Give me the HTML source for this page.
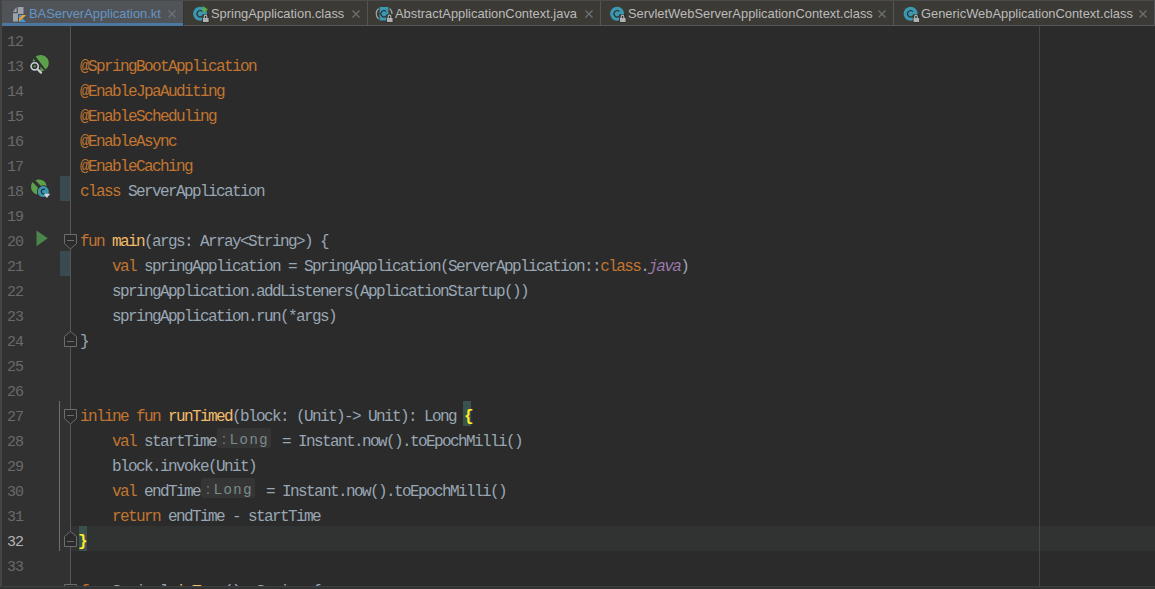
<!DOCTYPE html>
<html><head><meta charset="utf-8">
<style>
html,body{margin:0;padding:0;}
body{width:1155px;height:589px;overflow:hidden;background:#2b2b2b;position:relative;font-family:"Liberation Sans",sans-serif;}
.abs{position:absolute;}
/* tab bar */
#tabbar{position:absolute;left:0;top:0;width:1155px;height:26px;background:#3b3a35;}
#tabbar .topline{position:absolute;left:0;top:0;width:1155px;height:1px;background:#4b4b4b;}
#tabbar .botline{position:absolute;left:0;top:25px;width:1155px;height:1px;background:#555555;}
.tab{position:absolute;top:1px;height:24px;}
.tab .name{position:absolute;top:4px;font-size:12.9px;line-height:16px;color:#bbbbbb;white-space:nowrap;}
.tab .x{position:absolute;top:9px;width:8px;height:8px;}
.sep{position:absolute;top:1px;width:1px;height:24px;background:#555555;}
/* editor */
#gutter{position:absolute;left:2px;top:26px;width:68px;height:560px;background:#313131;}
#leftstrip{position:absolute;left:0;top:0;width:2px;height:589px;background:#444444;}
#gsep{position:absolute;left:70px;top:26px;width:1px;height:560px;background:#555555;}
#margin{position:absolute;left:1039px;top:26px;width:1px;height:560px;background:#474747;}
#bottom{position:absolute;z-index:10;left:0;top:586px;width:1155px;height:3px;background:#323434;border-top:1px solid #3d3f40;box-sizing:border-box;}
.ln{position:absolute;margin-top:4px;left:7px;width:20px;font-family:"Liberation Mono",monospace;font-size:15px;letter-spacing:-1px;line-height:25px;height:25px;color:#6a6a6a;white-space:pre;}
.code{position:absolute;margin-top:4px;left:80px;font-family:"Liberation Mono",monospace;font-size:16px;letter-spacing:-1.6px;line-height:25px;height:25px;color:#99a6b3;white-space:pre;}
.ln.cur{color:#b4b4b4;}
.k{color:#c27530;}
.f{color:#f2bc68;}
.p{color:#9876aa;font-style:italic;}
.hint{display:inline-block;position:relative;width:58px;height:25px;vertical-align:top;letter-spacing:0;}
.hint i{position:absolute;left:1px;top:-2px;width:54px;height:20px;background:#353535;border-radius:2px;font-style:normal;font-family:"Liberation Sans",sans-serif;font-size:14px;line-height:22px;color:#7c8c89;letter-spacing:2px;}
.brace{color:#ffef28;font-weight:bold;}
.hint b{position:absolute;left:5px;top:0;font-weight:normal;}
.hint s{position:absolute;left:13px;top:0;text-decoration:none;}
.vcs{position:absolute;left:60px;width:10px;height:25px;background:#394b50;}
</style></head><body>
<div id="tabbar">
  <div class="topline"></div>
  <div class="botline"></div>
  <!-- tab1 selected -->
  <div class="tab" style="left:2px;width:181px;background:#505459;height:25px;"></div>
  <div class="abs" style="left:2px;top:23px;width:181px;height:3px;background:#4a78a2;"></div>
  <div class="sep" style="left:183px;background:#353535;height:25px;"></div>
  <div class="sep" style="left:367px;"></div>
  <div class="sep" style="left:600px;"></div>
  <div class="sep" style="left:893px;"></div>
  <div class="sep" style="left:1154px;"></div>
  <div class="tab" style="left:0;width:0"></div>
  <span class="abs" style="left:29px;top:6px;font-size:12.9px;line-height:16px;color:#6694c2;white-space:nowrap;">BAServerApplication.kt</span>
  <span class="abs" style="left:211px;top:6px;font-size:12.9px;line-height:16px;color:#bbbbbb;white-space:nowrap;">SpringApplication.class</span>
  <span class="abs" style="left:395px;top:6px;font-size:12.9px;line-height:16px;color:#bbbbbb;white-space:nowrap;">AbstractApplicationContext.java</span>
  <span class="abs" style="left:628px;top:6px;font-size:12.9px;line-height:16px;color:#bbbbbb;white-space:nowrap;">ServletWebServerApplicationContext.class</span>
  <span class="abs" style="left:921px;top:6px;font-size:12.9px;line-height:16px;color:#bbbbbb;white-space:nowrap;">GenericWebApplicationContext.class</span>
</div>
<svg class="abs" style="left:0;top:0;z-index:5" width="1155" height="589">
<path d="M13 13 L17 7 H23.5 V21.5 H13 Z" fill="#9da2a8"/>
<path d="M13 12 L16.5 7 V12 Z" fill="#9da2a8"/><path d="M17.2 6.5 V12.6 H12.5" stroke="#505459" stroke-width="1.2" fill="none"/>
<rect x="18" y="14" width="8.6" height="8.4" fill="#505459"/>
<path d="M19 15 H26 L19 22 Z" fill="#3b97e8"/><path d="M26 22 H19.5 L22.8 18.7 Z" fill="#3b97e8"/><path d="M22.5 15 H26 L19 22 V18.5 Z" fill="#f29f28"/>
<path d="M168.5 10.5 L175.5 17.5 M175.5 10.5 L168.5 17.5" stroke="#6f7275" stroke-width="1.2" fill="none"/>
<circle cx="200.1" cy="13.8" r="7" fill="#3a98b0"/><path d="M202.29999999999998 11.600000000000001 A3.1 3.1 0 1 0 202.29999999999998 16.0" stroke="#2a2f31" stroke-width="1.1" fill="none"/>
<path d="M202.8 6 L208 9.5 L202.8 13 Z" fill="#5aac43"/>
<rect x="202.2" y="14.2" width="7" height="8.6" rx="1" fill="#2e2d2a" opacity="0.9"/><path d="M204.2 18.2 V16.4 a1.3 1.3 0 0 1 2.6 0 V18.2" stroke="#afb1b3" stroke-width="1.1" fill="none"/><rect x="203" y="18" width="5.6" height="4" fill="#afb1b3"/>
<path d="M352.5 10.5 L359.5 17.5 M359.5 10.5 L352.5 17.5" stroke="#6f7275" stroke-width="1.2" fill="none"/>
<path d="M379.6 7 H388.4 V20.5 H379.6 Z" fill="#3a98b0"/>
<path d="M378.6 8.5 A7 7 0 0 0 378.6 19" stroke="#9da2a8" stroke-width="1.2" fill="none"/>
<path d="M389.6 8.5 A7 7 0 0 1 389.6 19" stroke="#9da2a8" stroke-width="1.2" fill="none"/>
<path d="M386.2 11.6 A3.1 3.1 0 1 0 386.2 16" stroke="#2a2f31" stroke-width="1.1" fill="none"/>
<rect x="386.2" y="14.2" width="7" height="8.6" rx="1" fill="#2e2d2a" opacity="0.9"/><path d="M388.2 18.2 V16.4 a1.3 1.3 0 0 1 2.6 0 V18.2" stroke="#afb1b3" stroke-width="1.1" fill="none"/><rect x="387" y="18" width="5.6" height="4" fill="#afb1b3"/>
<path d="M585.5 10.5 L592.5 17.5 M592.5 10.5 L585.5 17.5" stroke="#6f7275" stroke-width="1.2" fill="none"/>
<circle cx="617.1" cy="13.8" r="7" fill="#3a98b0"/><path d="M619.3000000000001 11.600000000000001 A3.1 3.1 0 1 0 619.3000000000001 16.0" stroke="#2a2f31" stroke-width="1.1" fill="none"/>
<rect x="619.2" y="14.2" width="7" height="8.6" rx="1" fill="#2e2d2a" opacity="0.9"/><path d="M621.2 18.2 V16.4 a1.3 1.3 0 0 1 2.6 0 V18.2" stroke="#afb1b3" stroke-width="1.1" fill="none"/><rect x="620" y="18" width="5.6" height="4" fill="#afb1b3"/>
<path d="M878.5 10.5 L885.5 17.5 M885.5 10.5 L878.5 17.5" stroke="#6f7275" stroke-width="1.2" fill="none"/>
<circle cx="910.6" cy="13.8" r="7" fill="#3a98b0"/><path d="M912.8000000000001 11.600000000000001 A3.1 3.1 0 1 0 912.8000000000001 16.0" stroke="#2a2f31" stroke-width="1.1" fill="none"/>
<rect x="912.7" y="14.2" width="7" height="8.6" rx="1" fill="#2e2d2a" opacity="0.9"/><path d="M914.7 18.2 V16.4 a1.3 1.3 0 0 1 2.6 0 V18.2" stroke="#afb1b3" stroke-width="1.1" fill="none"/><rect x="913.5" y="18" width="5.6" height="4" fill="#afb1b3"/>
<path d="M1139.5 10.5 L1146.5 17.5 M1146.5 10.5 L1139.5 17.5" stroke="#6f7275" stroke-width="1.2" fill="none"/>
</svg>
<div id="leftstrip"></div>
<div id="gutter"></div>
<div id="gsep"></div>
<div class="abs" style="left:71px;top:526px;width:1084px;height:25px;background:#313232;"></div>
<div class="abs" style="left:463px;top:401px;width:8px;height:25px;background:#3b514d;"></div>
<div class="abs" style="left:79px;top:526px;width:8px;height:25px;background:#3b514d;"></div>
<div id="margin"></div>
<div id="bottom"></div>
<svg class="abs" style="left:0;top:0;z-index:3" width="1155" height="589">
<rect x="60" y="176" width="10" height="25" fill="#394b50"/>
<rect x="60" y="251" width="10" height="25" fill="#394b50"/>
<rect x="59" y="401" width="1" height="150" fill="#64736d"/>
<path d="M35.6 56.6 A8 8 0 0 1 45.6 69.6 Z" fill="#5ca04b"/>
<path d="M33.2 58.6 L35.8 61.4 L32.6 62.8 Z" fill="#5ca04b"/>
<path d="M40.4 66.6 L44.4 70.6 A8 8 0 0 1 40.4 71.2 Z" fill="#5ca04b"/>
<circle cx="34.7" cy="66.3" r="5" fill="#313131"/>
<circle cx="34.7" cy="66.3" r="3.6" fill="none" stroke="#c9ced4" stroke-width="1.6"/>
<circle cx="34.7" cy="66.3" r="1.3" fill="#4e8a3e"/>
<path d="M37.6 69.2 L41 72.6" stroke="#c9ced4" stroke-width="2.2" stroke-linecap="round"/>
<path d="M35.4 180.2 A8 8 0 0 1 46.6 186 L41.6 186.8 Z" fill="#5ca04b"/>
<path d="M32.6 182 L38.6 188.4 L37.6 194.6 A8 8 0 0 1 32.6 182 Z" fill="#5ca04b"/>
<circle cx="43.3" cy="191.6" r="6.4" fill="#313131"/>
<circle cx="43.3" cy="191.6" r="5.5" fill="#3a98b0"/>
<path d="M45 189.6 A2.4 2.4 0 1 0 45 193.6" stroke="#26292b" stroke-width="1.2" fill="none"/>
<path d="M43.6 193.8 H50.2 L46.9 198 Z" fill="#cfd2d6"/>
<path d="M36.5 230.5 L47.8 238.3 L36.5 246.3 Z" fill="#4a8649"/>
<path d="M64.5 234.5 H76.5 V243.5 L70.5 249 L64.5 243.5 Z" fill="#2b2b2b" stroke="#6b6d70" stroke-width="1"/><rect x="67" y="240" width="7" height="1" fill="#6b6d70"/>
<path d="M70.5 331.4 L76.5 336.5 V346.5 H64.5 V336.5 Z" fill="#2b2b2b" stroke="#6b6d70" stroke-width="1"/><rect x="67" y="341" width="7" height="1" fill="#6b6d70"/>
<path d="M64.5 409.5 H76.5 V418.5 L70.5 424 L64.5 418.5 Z" fill="#2b2b2b" stroke="#6b6d70" stroke-width="1"/><rect x="67" y="415" width="7" height="1" fill="#6b6d70"/>
<path d="M70.5 531.4 L76.5 536.5 V546.5 H64.5 V536.5 Z" fill="#2b2b2b" stroke="#6b6d70" stroke-width="1"/><rect x="67" y="541" width="7" height="1" fill="#6b6d70"/>
<path d="M64.5 584.5 H76.5 V593.5 L70.5 599 L64.5 593.5 Z" fill="#2b2b2b" stroke="#6b6d70" stroke-width="1"/><rect x="67" y="590" width="7" height="1" fill="#6b6d70"/>
</svg>
<div id="lines">
<div class="ln" style="top:26px">12</div>
<div class="code" style="top:26px"></div>
<div class="ln" style="top:51px">13</div>
<div class="code" style="top:51px"><span class="k">@SpringBootApplication</span></div>
<div class="ln" style="top:76px">14</div>
<div class="code" style="top:76px"><span class="k">@EnableJpaAuditing</span></div>
<div class="ln" style="top:101px">15</div>
<div class="code" style="top:101px"><span class="k">@EnableScheduling</span></div>
<div class="ln" style="top:126px">16</div>
<div class="code" style="top:126px"><span class="k">@EnableAsync</span></div>
<div class="ln" style="top:151px">17</div>
<div class="code" style="top:151px"><span class="k">@EnableCaching</span></div>
<div class="ln" style="top:176px">18</div>
<div class="code" style="top:176px"><span class="k">class</span> ServerApplication</div>
<div class="ln" style="top:201px">19</div>
<div class="code" style="top:201px"></div>
<div class="ln" style="top:226px">20</div>
<div class="code" style="top:226px"><span class="k">fun</span> <span class="f">main</span>(args: Array&lt;String&gt;) {</div>
<div class="ln" style="top:251px">21</div>
<div class="code" style="top:251px">    <span class="k">val</span> springApplication = SpringApplication(ServerApplication::<span class="k">class</span>.<span class="p">java</span>)</div>
<div class="ln" style="top:276px">22</div>
<div class="code" style="top:276px">    springApplication.addListeners(ApplicationStartup())</div>
<div class="ln" style="top:301px">23</div>
<div class="code" style="top:301px">    springApplication.run(*args)</div>
<div class="ln" style="top:326px">24</div>
<div class="code" style="top:326px">}</div>
<div class="ln" style="top:351px">25</div>
<div class="code" style="top:351px"></div>
<div class="ln" style="top:376px">26</div>
<div class="code" style="top:376px"></div>
<div class="ln" style="top:401px">27</div>
<div class="code" style="top:401px"><span class="k">inline fun</span> <span class="f">runTimed</span>(block: (Unit)-&gt; Unit): Long <span class="brace">{</span></div>
<div class="ln" style="top:426px">28</div>
<div class="code" style="top:426px">    <span class="k">val</span> startTime<span class="hint"><i><b>:</b><s>Long</s></i></span> = Instant.now().toEpochMilli()</div>
<div class="ln" style="top:451px">29</div>
<div class="code" style="top:451px">    block.invoke(Unit)</div>
<div class="ln" style="top:476px">30</div>
<div class="code" style="top:476px">    <span class="k">val</span> endTime<span class="hint"><i><b>:</b><s>Long</s></i></span> = Instant.now().toEpochMilli()</div>
<div class="ln" style="top:501px">31</div>
<div class="code" style="top:501px">    <span class="k">return</span> endTime - startTime</div>
<div class="ln cur" style="top:526px">32</div>
<div class="code" style="top:526px"><span class="brace" style="position:relative;left:-2px">}</span></div>
<div class="ln" style="top:551px">33</div>
<div class="code" style="top:551px"></div>
<div class="ln" style="top:576px">34</div>
<div class="code" style="top:576px"><span class="k">f</span>   S  i  l <span class="f">i</span> <span class="f">T</span>   ()  S  i   {</div>
</div>
</body></html>
